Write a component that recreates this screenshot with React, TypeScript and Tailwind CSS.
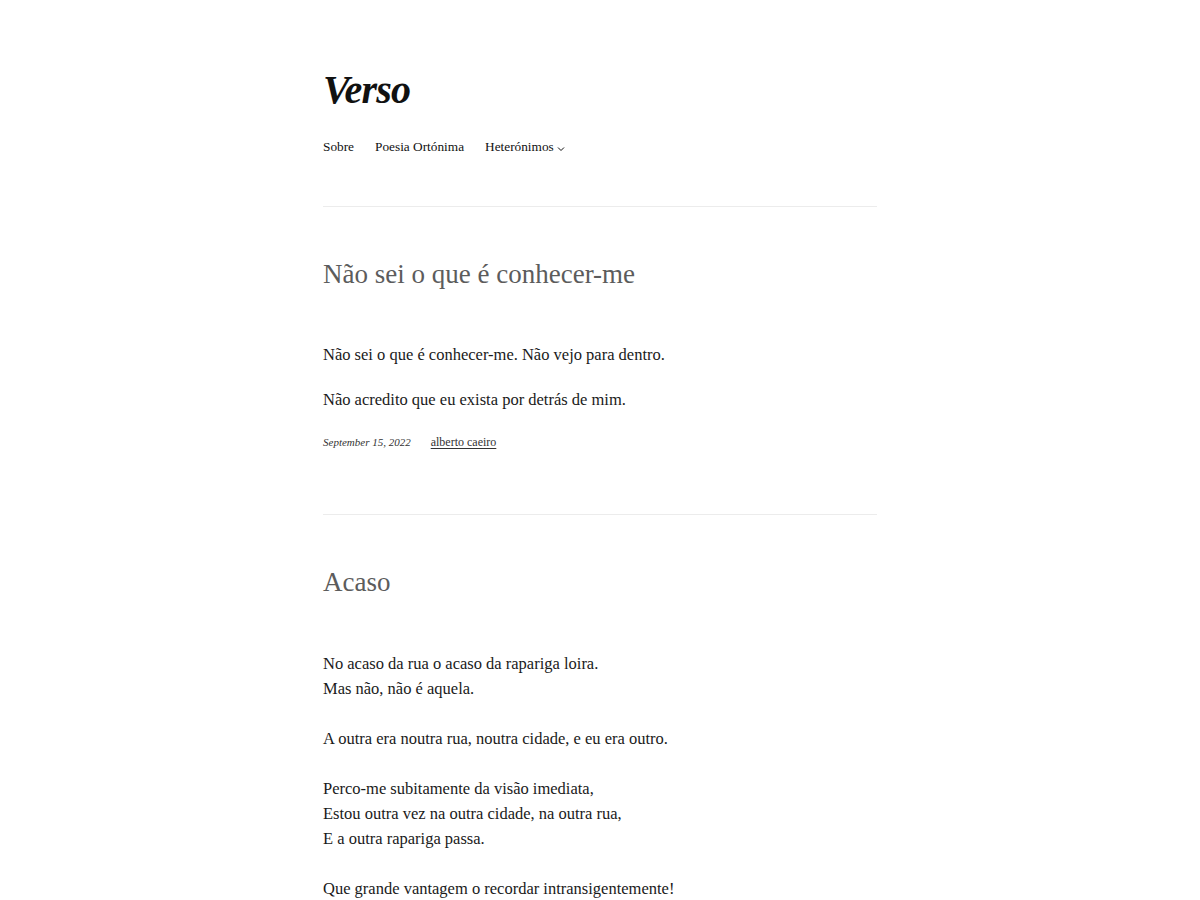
import React from "react";

const serif = { fontFamily: '"Liberation Serif", "DejaVu Serif", serif' };

export default function App() {
  return (
    <div className="min-h-screen bg-white text-[#1a1a1a]" style={serif}>
      <div className="mx-auto w-[554px] pt-[66px]">
        <header>
          <h1 className="text-[40px] leading-[48px] font-bold italic tracking-[-0.8px] text-[#111]">Verso</h1>
          <nav className="mt-[21px] flex items-center gap-[21px] text-[13.3px] leading-[24px] text-[#111]">
            <span>Sobre</span>
            <span>Poesia Ortónima</span>
            <span className="flex items-center gap-[3px]">
              Heterónimos
              <svg width="8" height="6" viewBox="0 0 8 6" className="mt-[3px]">
                <path d="M1 1.5 L4 4.5 L7 1.5" fill="none" stroke="#111" strokeWidth="1" />
              </svg>
            </span>
          </nav>
        </header>

        <hr className="mt-[47px] border-0 border-t border-[#ececec]" />

        <article>
          <h2 className="mt-[50px] text-[27px] leading-[34px] text-[#5c5c5c]">Não sei o que é conhecer-me</h2>
          <div className="mt-[51px] text-[16.5px] leading-[25px]">
            <p>Não sei o que é conhecer-me. Não vejo para dentro.</p>
            <p className="mt-[20px]">Não acredito que eu exista por detrás de mim.</p>
          </div>
          <div className="mt-[21px] flex items-center gap-[20px] leading-[18px] text-[#333]">
            <span className="italic text-[11px]">September 15, 2022</span>
            <span className="underline underline-offset-2 text-[12px]">alberto caeiro</span>
          </div>
        </article>

        <hr className="mt-[63px] border-0 border-t border-[#ececec]" />

        <article>
          <h2 className="mt-[50px] text-[27px] leading-[34px] text-[#5c5c5c]">Acaso</h2>
          <div className="mt-[52px] text-[16.5px] leading-[25px]">
            <p>
              No acaso da rua o acaso da rapariga loira.
              <br />
              Mas não, não é aquela.
              <br />
              <br />
              A outra era noutra rua, noutra cidade, e eu era outro.
              <br />
              <br />
              Perco-me subitamente da visão imediata,
              <br />
              Estou outra vez na outra cidade, na outra rua,
              <br />
              E a outra rapariga passa.
              <br />
              <br />
              Que grande vantagem o recordar intransigentemente!
            </p>
          </div>
        </article>
      </div>
    </div>
  );
}
